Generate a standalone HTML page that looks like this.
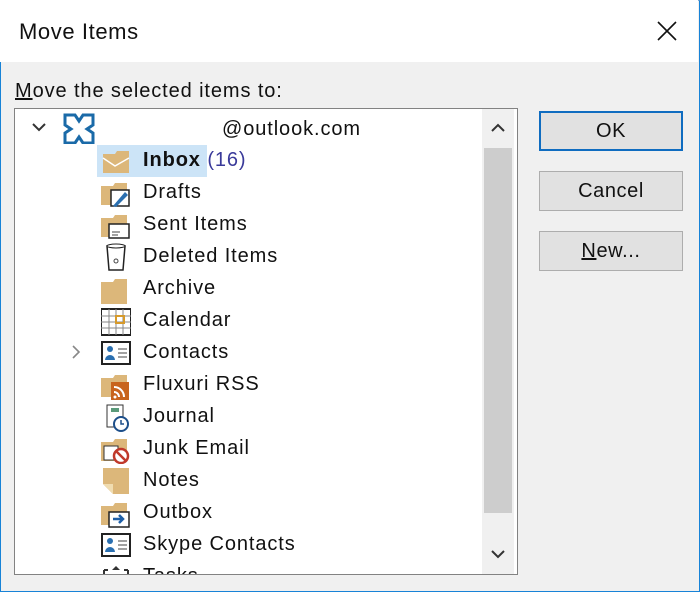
<!DOCTYPE html><html><head><meta charset="utf-8"><style>
body{margin:0;width:700px;height:592px;overflow:hidden;font-family:"Liberation Sans","DejaVu Sans",sans-serif;background:#f0f0f0;position:relative}
.win{position:absolute;left:0;top:0;width:698px;height:590px;border:1px solid #1883d7;border-top-color:#7aa6d0;background:#f0f0f0}
.title{position:absolute;left:0;top:0;width:698px;height:62px;background:#fff}
.t{position:absolute;white-space:nowrap;color:#111;letter-spacing:0.6px}
.tree{position:absolute;left:14px;top:108px;width:502px;height:465px;background:#fff;border:1px solid #828282;overflow:hidden}
.sb{position:absolute;left:467px;top:0;width:32px;height:465px;background:#f0f0f0}
.thumb{position:absolute;left:2px;top:39px;width:28px;height:365px;background:#cdcdcd}
.row{position:absolute;left:128px;font-size:20px;color:#111;white-space:nowrap;letter-spacing:0.9px;margin-top:1px}
.ic{position:absolute;left:86px;width:30px;height:30px}
.btn{position:absolute;left:539px;width:142px;height:38px;border:1px solid #adadad;background:#e1e1e1;font-size:20px;text-align:center;line-height:38px;color:#111;letter-spacing:0.6px}
</style></head><body>
<div class="win"></div>
<div class="title"></div>
<div class="t" style="left:19px;top:19px;font-size:22px">Move Items</div>
<svg style="position:absolute;left:656px;top:20px" width="22" height="22"><path d="M2 2L20 20M20 2L2 20" stroke="#111" stroke-width="1.6"/></svg>
<div class="t" style="left:15px;top:80px;font-size:20px;letter-spacing:0.9px"><u>M</u>ove the selected items to:</div>
<div class="tree">
<svg style="position:absolute;left:16px;top:12px" width="16" height="12"><path d="M2 3L8 9L14 3" stroke="#333" stroke-width="2" fill="none"/></svg>
<svg style="position:absolute;left:47px;top:3px" width="33" height="32"><path d="M3 3h10l4 6 4-6h10v10l-6 4 6 4v10H21l-4-6-4 6H3V21l6-4-6-4z" fill="none" stroke="#1a6aa8" stroke-width="3"/></svg>
<div class="row" style="left:207px;top:8px">@outlook.com</div>
<div style="position:absolute;left:82px;top:36px;width:110px;height:32px;background:#cce4f7"></div>
<div class="row" style="top:39px"><b>Inbox</b> <span style="color:#3a3a9a">(16)</span></div>
<div class="row" style="top:71px">Drafts</div>
<div class="row" style="top:103px">Sent Items</div>
<div class="row" style="top:135px">Deleted Items</div>
<div class="row" style="top:167px">Archive</div>
<div class="row" style="top:199px">Calendar</div>
<div class="row" style="top:231px">Contacts</div>
<div class="row" style="top:263px">Fluxuri RSS</div>
<div class="row" style="top:295px">Journal</div>
<div class="row" style="top:327px">Junk Email</div>
<div class="row" style="top:359px">Notes</div>
<div class="row" style="top:391px">Outbox</div>
<div class="row" style="top:423px">Skype Contacts</div>
<div class="row" style="top:455px">Tasks</div>
<svg style="position:absolute;left:56px;top:236px" width="10" height="14"><path d="M2 1L8 7L2 13" stroke="#888" stroke-width="1.6" fill="none"/></svg>
<svg class="ic" style="top:37px"><path d="M2 8h12l2-3h12v22H2z" fill="#dcb77a"/><path d="M2 12l12 8 14-8" stroke="#fff" stroke-width="1.5" fill="none"/></svg>
<svg class="ic" style="top:69px"><path d="M0 8h12l2-3h12v22H0z" fill="#dcb77a"/><rect x="10" y="12" width="18" height="16" fill="#fff" stroke="#222" stroke-width="1.5"/><path d="M12 28l12-14 3 3-12 12z" fill="#2a6fb0"/></svg>
<svg class="ic" style="top:101px"><path d="M0 8h12l2-3h12v22H0z" fill="#dcb77a"/><rect x="8" y="14" width="20" height="14" fill="#fff" stroke="#222" stroke-width="1.5"/><path d="M11 22h8M11 25h6" stroke="#444"/></svg>
<svg class="ic" style="top:133px"><path d="M6 4h18l-2 24H8z" fill="#fff" stroke="#222" stroke-width="1.5"/><ellipse cx="15" cy="4" rx="9" ry="2" fill="#fff" stroke="#222"/><circle cx="15" cy="19" r="2" fill="none" stroke="#444"/></svg>
<svg class="ic" style="top:165px"><path d="M0 8h12l2-3h12v25H0z" fill="#dcb77a"/></svg>
<svg class="ic" style="top:197px"><rect x="0" y="3" width="30" height="26" fill="#fff" stroke="#222" stroke-width="2"/><path d="M0 10h30M0 16h30M0 22h30M8 3v26M15 3v26M22 3v26" stroke="#888"/><rect x="15" y="10" width="8" height="7" fill="none" stroke="#d79a2a" stroke-width="2"/></svg>
<svg class="ic" style="top:229px"><rect x="1" y="4" width="28" height="22" fill="#fff" stroke="#222" stroke-width="2"/><circle cx="9" cy="11" r="3" fill="#2a6fb0"/><path d="M4 22a5 5 0 0110 0z" fill="#2a6fb0"/><path d="M17 11h9M17 15h9M17 19h9" stroke="#444"/></svg>
<svg class="ic" style="top:261px"><path d="M0 8h12l2-3h12v22H0z" fill="#dcb77a"/><rect x="10" y="12" width="18" height="18" fill="#c8641c"/><path d="M13 17a10 10 0 0110 10M13 22a5 5 0 015 5" stroke="#fff" stroke-width="2" fill="none"/><circle cx="14" cy="27" r="1.5" fill="#fff"/></svg>
<svg class="ic" style="top:293px"><rect x="6" y="3" width="16" height="22" fill="#fff" stroke="#333"/><rect x="10" y="6" width="8" height="4" fill="#5a9a7a"/><circle cx="20" cy="22" r="7" fill="#fff" stroke="#1d4f8a" stroke-width="2"/><path d="M20 18v4h3" stroke="#1d4f8a" stroke-width="1.5" fill="none"/></svg>
<svg class="ic" style="top:325px"><path d="M0 8h12l2-3h12v22H0z" fill="#dcb77a"/><rect x="3" y="12" width="14" height="14" fill="#fff" stroke="#333"/><circle cx="20" cy="22" r="7" fill="#fff" stroke="#c0392b" stroke-width="2.5"/><path d="M15 17l10 10" stroke="#c0392b" stroke-width="2.5"/></svg>
<svg class="ic" style="top:357px"><path d="M2 2h26v26H12L2 18z" fill="#dcb77a"/><path d="M2 18h10v10" fill="#f0dcb0"/></svg>
<svg class="ic" style="top:389px"><path d="M0 8h12l2-3h12v22H0z" fill="#dcb77a"/><rect x="8" y="14" width="20" height="15" fill="#fff" stroke="#222" stroke-width="1.5"/><path d="M12 21h10M18 17l4 4-4 4" stroke="#1d5fa8" stroke-width="2.5" fill="none"/></svg>
<svg class="ic" style="top:421px"><rect x="1" y="4" width="28" height="22" fill="#fff" stroke="#222" stroke-width="2"/><circle cx="9" cy="11" r="3" fill="#2a6fb0"/><path d="M4 22a5 5 0 0110 0z" fill="#2a6fb0"/><path d="M17 11h9M17 15h9M17 19h9" stroke="#444"/></svg>
<svg class="ic" style="top:453px"><path d="M3 8h4M23 8h4M3 8v22M27 8v22" stroke="#333" stroke-width="2"/><path d="M11 8l4-4 4 4z" fill="#333"/></svg>
<div class="sb"><div class="thumb"></div>
<svg style="position:absolute;left:8px;top:14px" width="16" height="10"><path d="M2 8l6-6 6 6" stroke="#333" stroke-width="2" fill="none"/></svg>
<svg style="position:absolute;left:8px;top:440px" width="16" height="10"><path d="M2 2l6 6 6-6" stroke="#333" stroke-width="2" fill="none"/></svg>
</div>
</div>
<div class="btn" style="top:111px;border:2px solid #0f6cc0;height:36px;line-height:36px;width:140px">OK</div>
<div class="btn" style="top:171px">Cancel</div>
<div class="btn" style="top:231px"><u>N</u>ew...</div>
</body></html>
